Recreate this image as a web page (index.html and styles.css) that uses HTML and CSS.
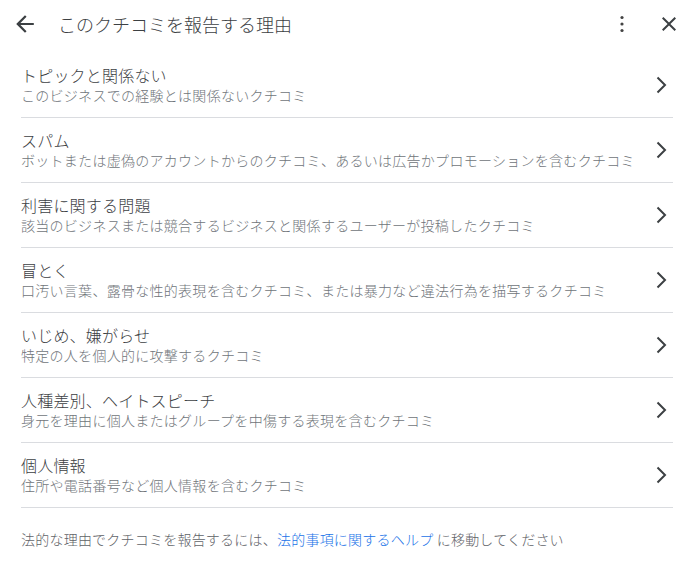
FILE: index.html
```html
<!DOCTYPE html>
<html lang="ja">
<head>
<meta charset="utf-8">
<link rel="stylesheet" href="styles.css">
</head>
<body>
<div class="dialog">
  <header class="header">
    <button class="icon-btn back" aria-label="戻る">
      <svg viewBox="0 0 24 24" width="24" height="24"><path d="M20 11H7.83l5.59-5.59L12 4l-8 8 8 8 1.41-1.41L7.83 13H20v-2z"/></svg>
    </button>
    <h1 class="title">このクチコミを報告する理由</h1>
    <button class="icon-btn more" aria-label="その他">
      <svg viewBox="0 0 24 24" width="24" height="24"><circle cx="12" cy="5.5" r="1.6"/><circle cx="12" cy="12" r="1.6"/><circle cx="12" cy="18.5" r="1.6"/></svg>
    </button>
    <button class="icon-btn close" aria-label="閉じる">
      <svg viewBox="0 0 24 24" width="24" height="24"><path d="M19 6.41L17.59 5 12 10.59 6.41 5 5 6.41 10.59 12 5 17.59 6.41 19 12 13.41 17.59 19 19 17.59 13.41 12z"/></svg>
    </button>
  </header>
  <ul class="list">
    <li class="row"><div class="text"><div class="r-title">トピックと関係ない</div><div class="r-sub">このビジネスでの経験とは関係ないクチコミ</div></div><svg class="chev" viewBox="0 0 24 24" width="24" height="24"><polyline points="8.5,4.5 16,12 8.5,19.5"/></svg></li>
    <li class="row"><div class="text"><div class="r-title">スパム</div><div class="r-sub">ボットまたは虚偽のアカウントからのクチコミ、あるいは広告かプロモーションを含むクチコミ</div></div><svg class="chev" viewBox="0 0 24 24" width="24" height="24"><polyline points="8.5,4.5 16,12 8.5,19.5"/></svg></li>
    <li class="row"><div class="text"><div class="r-title">利害に関する問題</div><div class="r-sub">該当のビジネスまたは競合するビジネスと関係するユーザーが投稿したクチコミ</div></div><svg class="chev" viewBox="0 0 24 24" width="24" height="24"><polyline points="8.5,4.5 16,12 8.5,19.5"/></svg></li>
    <li class="row"><div class="text"><div class="r-title">冒とく</div><div class="r-sub">口汚い言葉、露骨な性的表現を含むクチコミ、または暴力など違法行為を描写するクチコミ</div></div><svg class="chev" viewBox="0 0 24 24" width="24" height="24"><polyline points="8.5,4.5 16,12 8.5,19.5"/></svg></li>
    <li class="row"><div class="text"><div class="r-title">いじめ、嫌がらせ</div><div class="r-sub">特定の人を個人的に攻撃するクチコミ</div></div><svg class="chev" viewBox="0 0 24 24" width="24" height="24"><polyline points="8.5,4.5 16,12 8.5,19.5"/></svg></li>
    <li class="row"><div class="text"><div class="r-title">人種差別、ヘイトスピーチ</div><div class="r-sub">身元を理由に個人またはグループを中傷する表現を含むクチコミ</div></div><svg class="chev" viewBox="0 0 24 24" width="24" height="24"><polyline points="8.5,4.5 16,12 8.5,19.5"/></svg></li>
    <li class="row"><div class="text"><div class="r-title">個人情報</div><div class="r-sub">住所や電話番号など個人情報を含むクチコミ</div></div><svg class="chev" viewBox="0 0 24 24" width="24" height="24"><polyline points="8.5,4.5 16,12 8.5,19.5"/></svg></li>
  </ul>
  <p class="footer">法的な理由でクチコミを報告するには、<a class="link" href="#">法的事項に関するヘルプ</a> に移動してください</p>
</div>
</body>
</html>
```
FILE: styles.css
```css
* { box-sizing: border-box; }
html, body { margin: 0; padding: 0; background: #fff; }
body {
  font-family: "Noto Sans CJK JP", "Noto Sans", sans-serif;
  font-weight: 300;
  color: #3c4043;
  width: 694px;
  height: 576px;
  overflow: hidden;
}
.dialog { display: flex; flex-direction: column; }
.header {
  display: flex;
  align-items: center;
  height: 48px;
  padding: 0 13px;
}
.icon-btn {
  border: 0;
  background: none;
  padding: 0;
  width: 24px;
  height: 24px;
  display: flex;
  align-items: center;
  justify-content: center;
  cursor: pointer;
}
.icon-btn svg { fill: #3c4043; display: block; }
.back svg { transform: scale(1.1); }
.title {
  margin: 0 0 0 21px;
  font-size: 18px;
  font-weight: 300;
  line-height: 24px;
  flex: 1;
  color: #3c4043;
}
.more { margin-right: 23px; }
.more svg { fill: #444; }
.list {
  list-style: none;
  margin: 5px 21px 0;
  padding: 0;
}
.row {
  display: flex;
  align-items: center;
  padding: 11px 0 13px;
  border-bottom: 1px solid #dadce0;
  height: 65px;
}
.text { flex: 1; min-width: 0; }
.r-title {
  font-size: 16px;
  line-height: 22px;
  color: #3c4043;
  letter-spacing: 0.2px;
}
.r-sub {
  font-size: 14px;
  line-height: 18px;
  color: #70757a;
  white-space: nowrap;
  letter-spacing: 0.28px;
}
.chev {
  flex: none;
  fill: none;
  stroke: #3c4043;
  stroke-width: 2;
  margin-top: 2px;
}
.footer {
  margin: 21px 21px 0;
  font-size: 14px;
  line-height: 20px;
  color: #5f6368;
  letter-spacing: 0.22px;
}
.link { color: #1a73e8; text-decoration: none; }
```
